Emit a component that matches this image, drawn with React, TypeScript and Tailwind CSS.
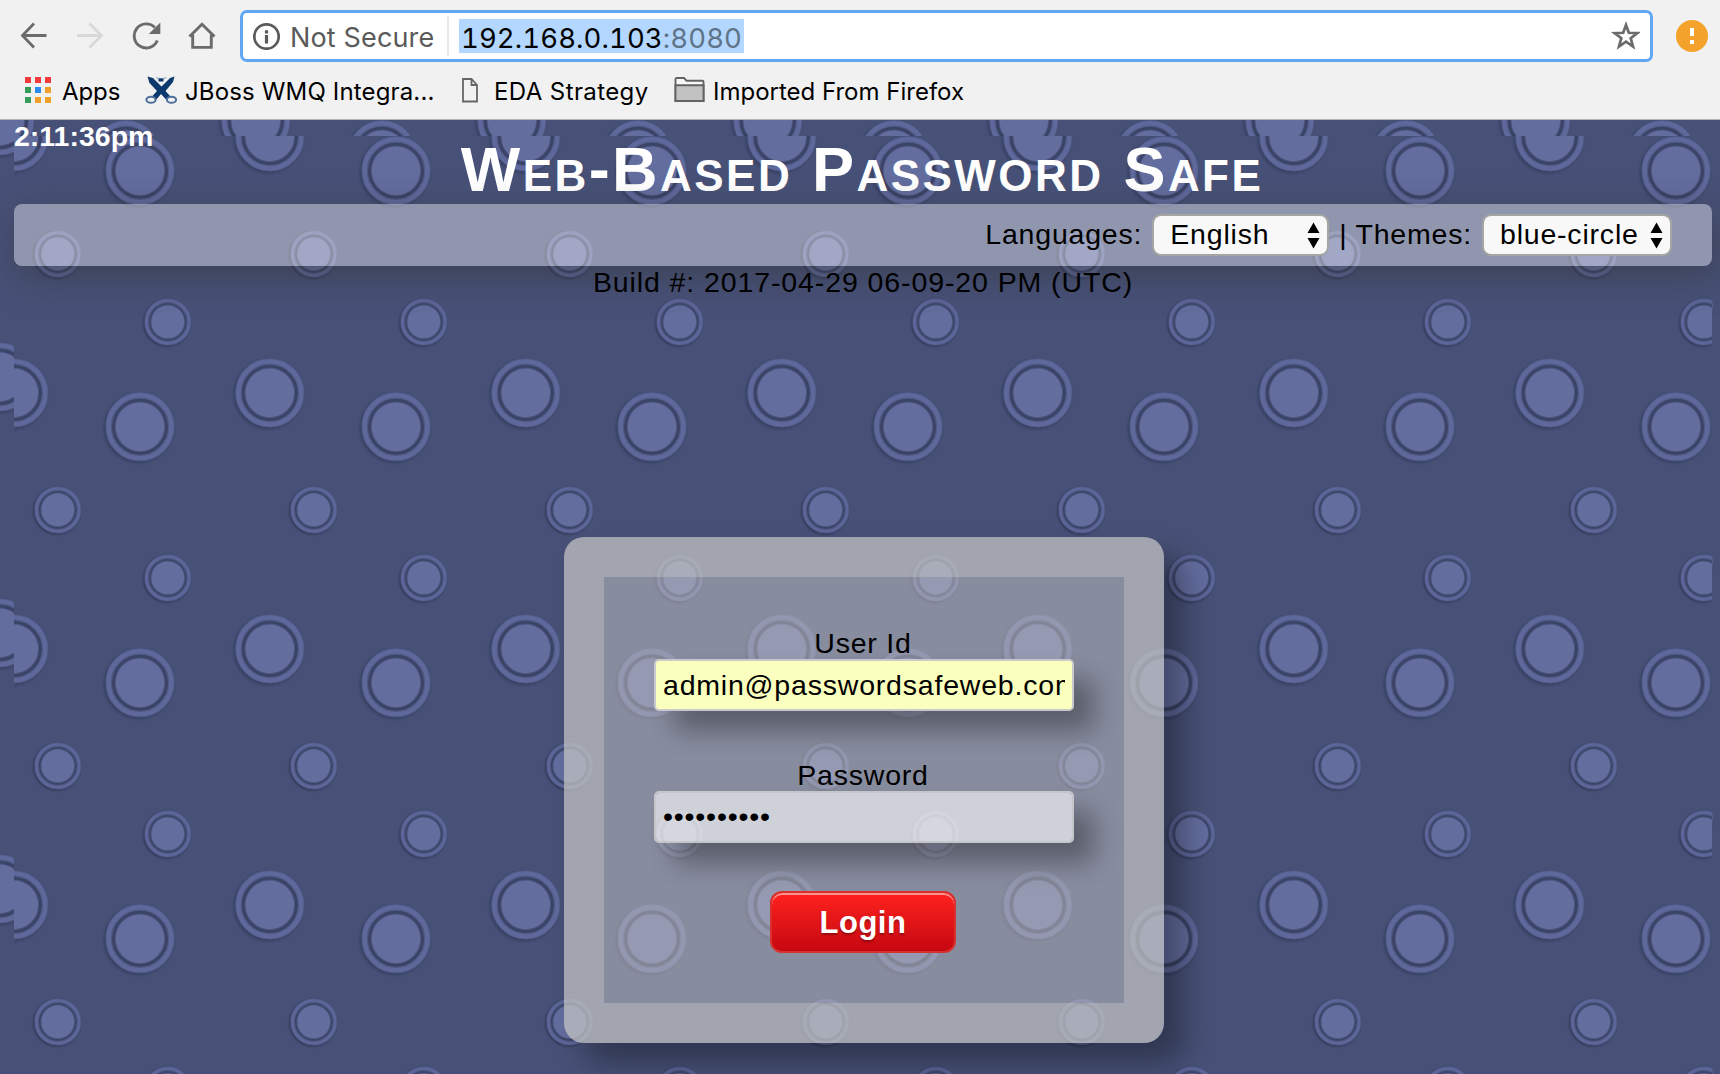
import type { ReactNode } from "react";

const SANS = "font-['Liberation_Sans',Arial,sans-serif]";
const UI = "font-['Inter',sans-serif]";

type Dot = { x: number; y: number };

const LARGE: Dot[] = [
  { x: 126, y: 34.7 },
  { x: -0.2, y: 0.9 },
  { x: 255.8, y: 0.9 },
  { x: -0.2, y: 256.9 },
  { x: 255.8, y: 256.9 },
];
const SMALL: Dot[] = [
  { x: 43.8, y: 117.9 },
  { x: 153.8, y: 185.9 },
];

/** Repeating 256px tile of embossed circles. */
function CirclePattern({ id }: { id: string }) {
  return (
    <svg className="absolute inset-0 h-full w-full" aria-hidden="true">
      <defs>
        <radialGradient id={`${id}-shade`}>
          <stop offset="0.82" stopColor="#2d3454" stopOpacity="0.8" />
          <stop offset="0.91" stopColor="#353c5e" stopOpacity="0.4" />
          <stop offset="1" stopColor="#475177" stopOpacity="0" />
        </radialGradient>
        <pattern id={id} width="256" height="256" patternUnits="userSpaceOnUse">
          <rect width="256" height="256" fill="#475177" />
          {LARGE.map((c) => (
            <g key={`${c.x}-${c.y}`} transform={`translate(${c.x} ${c.y})`}>
              <circle cx="-1.500" cy="1.500" r="38.500" fill={`url(#${id}-shade)`} />
              <circle r="30" fill="#3a4265" />
              <circle r="31.300" fill="none" stroke="#4f5986" strokeWidth="6.600" />
              <circle r="31.500" fill="none" stroke="#5e689a" strokeWidth="4.400" />
              <circle r="25.300" fill="#4a537f" />
              <circle r="24.300" fill="#636d9e" />
            </g>
          ))}
          {SMALL.map((c) => (
            <g key={`${c.x}-${c.y}`} transform={`translate(${c.x} ${c.y})`}>
              <circle cx="-1.200" cy="1.200" r="26.500" fill={`url(#${id}-shade)`} />
              <circle r="21" fill="#3d4569" />
              <circle r="21.200" fill="none" stroke="#4f5986" strokeWidth="4.400" />
              <circle r="21.400" fill="none" stroke="#5c6698" strokeWidth="2.700" />
              <circle r="17.200" fill="#4b5480" />
              <circle r="16.300" fill="#636d9e" />
            </g>
          ))}
        </pattern>
      </defs>
      <rect width="100%" height="100%" fill={`url(#${id})`} />
    </svg>
  );
}

function NavIcons() {
  return (
    <div className="flex h-[52px] w-[240px] shrink-0 items-center pl-[20px]">
      <svg width="28" height="28" viewBox="0 0 28 28" fill="none" stroke="#6b6b6b" strokeWidth="2.8">
        <path d="M26.500 13.500H3M14 1.500 2.500 13.500l11.500 12" />
      </svg>
      <svg className="ml-[28px]" width="28" height="28" viewBox="0 0 28 28" fill="none" stroke="#d8d8d8" strokeWidth="2.8">
        <path d="M1 13.500h24M13.500 1.500l12 12-12 12" />
      </svg>
      <svg className="ml-[28px]" width="30" height="28" viewBox="0 0 30 28" fill="none">
        <path d="M25.300 18.500A12 12 0 1 1 22.800 5.500" stroke="#6b6b6b" strokeWidth="2.900" />
        <path d="M28.300 0.500V12H16.800Z" fill="#6b6b6b" />
      </svg>
      <svg className="ml-[26px]" width="28" height="28" viewBox="0 0 28 28" fill="none" stroke="#6b6b6b" strokeWidth="2.900">
        <path d="M1.500 14.500 14 2.300l12.500 12.200M4.700 12.500V25.400H23.300V12.500" />
      </svg>
    </div>
  );
}

function Toolbar() {
  return (
    <div className="flex items-center pt-[10px]">
      <NavIcons />
      <div className="flex h-[52px] w-[1413px] shrink-0 items-center rounded-[7px] border-[3px] border-[#62a7f4] bg-white pl-[10px] pr-[10px]">
        <svg width="28" height="28" viewBox="0 0 28 28">
          <circle cx="13.500" cy="14.500" r="12.200" fill="none" stroke="#5a5a5a" strokeWidth="2.700" />
          <path d="M11.900 8.300h3.200v3.200h-3.200zM11.900 13h3.200v8.500h-3.200z" fill="#5a5a5a" />
        </svg>
        <span className="ml-[9px] w-[147px] whitespace-nowrap pt-[3px] text-[27px] leading-[34px] tracking-[0.150px] text-[#5a5a5a]">Not Secure</span>
        <div className="ml-[10px] h-[40px] w-[2px] bg-[#e8e8e8]" />
        <span className="ml-[10px] h-[34px] w-[285px] whitespace-nowrap bg-[#b3d7fe] pl-[2px] pt-[2px] text-[27.500px] leading-[34px] tabular-nums tracking-[0.100px] text-black">
          192.168.0.103<span className="text-[#5f7488]">:8080</span>
        </span>
        <svg className="ml-auto" width="30" height="30" viewBox="0 0 30 30">
          <path d="M16 4 18.800 11.800 27.300 12.100 20.700 17.200 23 25.500 16 20.700 9 25.500 11.300 17.200 4.700 12.100 13.200 11.800Z" fill="none" stroke="#6b6b6b" strokeWidth="2.700" />
        </svg>
      </div>
      <div className="ml-[23px] flex h-[32px] w-[32px] flex-col items-center justify-center gap-[4px] rounded-full bg-[#f3a32b]">
        <div className="h-[8px] w-[4px] bg-white" />
        <div className="h-[4px] w-[4px] bg-white" />
      </div>
    </div>
  );
}

const APP_COLORS = [
  "bg-[#f23a3a]", "bg-[#f23a3a]", "bg-[#f23a3a]",
  "bg-[#369c58]", "bg-[#2b8cf0]", "bg-[#f0a029]",
  "bg-[#369c58]", "bg-[#f0a029]", "bg-[#f0a029]",
];

function Bookmark({ icon, label, className }: { icon: ReactNode; label: string; className: string }) {
  return (
    <div className="flex items-center whitespace-nowrap text-[24px] leading-[30px] text-black">
      {icon}
      <span className={`pt-[3px] ${className}`}>{label}</span>
    </div>
  );
}

function Bookmarks() {
  return (
    <div className="flex h-[56px] items-center pl-[25px]">
      <Bookmark
        label="Apps"
        className="ml-[11px] w-[83px] tracking-[-0.100px]"
        icon={
          <div className="grid grid-cols-3 gap-[4px]">
            {APP_COLORS.map((c, i) => (
              <div key={i} className={`h-[6px] w-[6px] ${c}`} />
            ))}
          </div>
        }
      />
      <Bookmark
        label="JBoss WMQ Integra..."
        className="ml-[8px] w-[277px] tracking-[0.150px]"
        icon={
          <svg width="32" height="30" viewBox="0 0 32 30">
            <path d="M2.500 1.500 8 3l8.500 8.500L25 3l4.500-1.500L28 7l-7.500 9 4.500 5 5 2-2 3-6-.5-6-6.500-5.500 6.500-6 .5-2-3 5-2 4.500-5L4.500 8Z" fill="#0b386d" />
            <path d="M11 2.500c2 1.600 8.500 1.600 10.500 0" stroke="#a9b7c9" strokeWidth="1.600" fill="none" />
            <path d="M13.500 3.500h5v3h-5z" fill="#0b386d" />
            <ellipse cx="6" cy="24.800" rx="4.600" ry="3" fill="#f1f1f1" stroke="#4d6f9a" strokeWidth="2" />
            <ellipse cx="26.500" cy="24.800" rx="4.600" ry="3" fill="#f1f1f1" stroke="#4d6f9a" strokeWidth="2" />
          </svg>
        }
      />
      <Bookmark
        label="EDA Strategy"
        className="ml-[16px] w-[164px] tracking-[0.400px]"
        icon={
          <svg width="16" height="26" viewBox="0 0 16 26" fill="none" stroke="#666" strokeWidth="1.800">
            <path d="M1 2H9.500L15 8V24.500H1ZM9.500 2V8H15" />
          </svg>
        }
      />
      <Bookmark
        label="Imported From Firefox"
        className="ml-[8px] tracking-[0px]"
        icon={
          <svg className="ml-[16px]" width="31" height="26" viewBox="0 0 31 26">
            <path d="M1.500 24V2.300c0-.8.500-1.300 1.300-1.300H10l2.500 2.700H28.500c.8 0 1 .5 1 1V24Z" fill="#f7f7f7" stroke="#636363" strokeWidth="1.900" />
            <path d="M1.500 8.200h28V24h-28Z" fill="#c2c2c2" stroke="#636363" strokeWidth="1.900" />
          </svg>
        }
      />
    </div>
  );
}

function Select({ label, className }: { label: string; className: string }) {
  return (
    <div className={`flex h-[42px] items-center justify-between rounded-[9px] border-2 border-[#a5a5a3] bg-[#f8f8f8] pl-[16px] text-black ${className}`}>
      <span className="pb-[2px] leading-[34px]">{label}</span>
      <svg width="13" height="27" viewBox="0 0 13 27" fill="#000">
        <path d="M6.500 0.500 12.500 11H0.500ZM6.500 26.500 12.500 16H0.500Z" />
      </svg>
    </div>
  );
}

function LoginCard() {
  const field =
    "block h-[52px] w-[420px] rounded-[5px] border-2 px-[7px] text-[28.500px] leading-[34px] tracking-[0.800px] text-black shadow-[20px_20px_26px_rgba(0,0,0,0.33)] outline-none";
  return (
    <form className="ml-[550px] mt-[239px] flex w-[600px] flex-col items-center rounded-[20px] border-[40px] border-[rgba(194,194,194,0.46)] bg-[rgba(199,199,199,0.51)] py-[50px] text-[28.500px] leading-[32px] shadow-[20px_20px_30px_rgba(0,0,0,0.33)]">
      <label className="-ml-[2px] h-[32px]">User Id</label>
      <input className={`${field} border-[#c9c9cd] bg-[#faffbd]`} type="text" readOnly defaultValue="admin@passwordsafeweb.com" />
      <label className="-ml-[2px] mt-[48px] h-[32px]">Password</label>
      <input className={`${field} border-[#c4c6ca] bg-[rgba(255,255,255,0.6)] bg-clip-padding pb-[2px]`} type="password" readOnly defaultValue="0123456789" />
      <button
        type="button"
        className="-ml-[2px] mt-[48px] h-[62px] w-[186px] rounded-[12px] border-2 border-[#d8302c] bg-linear-to-b from-[#ff211d] to-[#c60712] pt-[1px] text-[31px] font-bold leading-[34px] tracking-[0.500px] text-white shadow-[inset_0_2px_0_rgba(255,255,255,0.5)] [text-shadow:0_2px_2px_rgba(0,0,0,0.3)]"
      >
        Login
      </button>
    </form>
  );
}

export default function App() {
  return (
    <div className={`flex h-[1074px] w-[1720px] flex-col overflow-hidden ${SANS}`}>
      <header className={`h-[120px] shrink-0 border-b border-[#b4b4b4] bg-[#f1f1f1] ${UI}`}>
        <Toolbar />
        <Bookmarks />
      </header>
      <main className="relative flex-1 overflow-hidden pl-[14px] pr-[8px] pt-[16px] tracking-[0.800px] text-black">
        <CirclePattern id="page-tile" />
        <div className="relative h-full">
          <CirclePattern id="body-tile" />
          <span className="absolute left-0 top-[-16px] text-[28.500px] font-bold leading-[32px] tracking-[0px] text-white">2:11:36pm</span>
          <div className="relative flex flex-col">
            <h1 className="h-[68px] pr-[2px] text-center text-[63px] font-bold leading-[66px] tracking-[2.450px] text-white [font-variant-caps:small-caps]">
              Web-Based Password Safe
            </h1>
            <nav className="flex h-[62px] items-center justify-end rounded-[8px] bg-[rgba(255,255,255,0.4)] pr-[40px] text-[28.500px] shadow-[4px_10px_34px_rgba(51,51,51,0.5)]">
              <span className="pb-[2px]">Languages:</span>
              <Select label="English" className="ml-[10px] w-[177px] pr-[7px]" />
              <span className="ml-[10px] pb-[2px]">|</span>
              <span className="ml-[8px] pb-[2px]">Themes:</span>
              <Select label="blue-circle" className="ml-[10px] w-[190px] pr-[7px]" />
            </nav>
            <p className="h-[32px] text-center text-[28.500px] leading-[32px] tracking-[0.900px]">Build #: 2017-04-29 06-09-20 PM (UTC)</p>
            <LoginCard />
          </div>
        </div>
      </main>
    </div>
  );
}
